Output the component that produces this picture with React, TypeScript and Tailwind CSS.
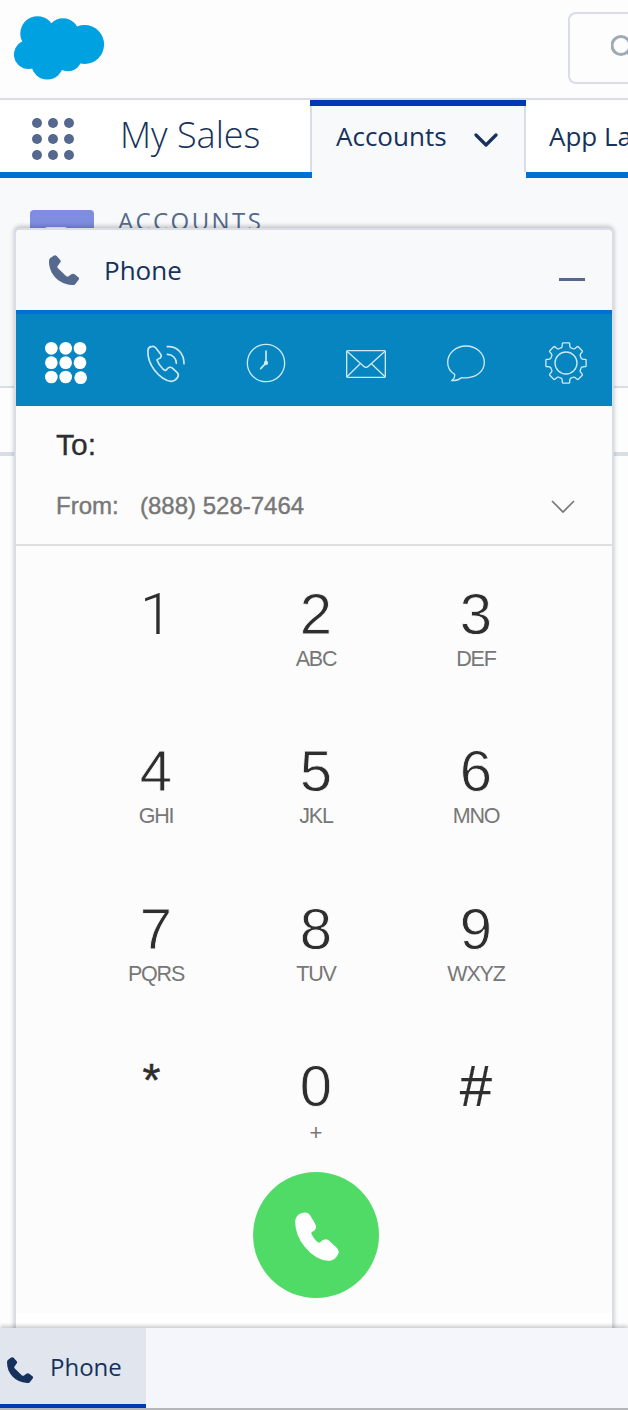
import React from 'react';

const keys = [
  ['1', ''], ['2', 'ABC'], ['3', 'DEF'],
  ['4', 'GHI'], ['5', 'JKL'], ['6', 'MNO'],
  ['7', 'PQRS'], ['8', 'TUV'], ['9', 'WXYZ'],
  ['*', ''], ['0', '+'], ['#', ''],
];

const digitStyles: Record<string, string> = {
  '1': "font-['Roboto',sans-serif] font-light",
  '*': '-ml-[9px] mb-3 text-[46px] leading-[49px] [-webkit-text-stroke:0.5px_#2e2e2e]',
  '#': '[-webkit-text-stroke:0.2px_#2e2e2e]',
};

function gearPath(cx: number, cy: number) {
  const pts: string[] = [];
  for (let i = 0; i < 8; i++) {
    const profile: [number, number][] = [[48, -16], [52, -12.5], [60, -10.5], [61, -8], [61, 8], [60, 10.5], [52, 12.5], [48, 16]];
    for (const [r, d] of profile) {
      const a = ((i * 45 + d - 90) * Math.PI) / 180;
      pts.push(`${(cx + r * Math.cos(a)).toFixed(1)} ${(cy + r * Math.sin(a)).toFixed(1)}`);
    }
  }
  return `M${pts.join('L')}Z`;
}

function Handset({ className }: { className: string }) {
  return (
    <svg viewBox="147 195 90 90" className={className} fill="currentColor">
      <path d="M160 198q5-4 10 0l10 11q4 4 1 8l-8 11q-2 4 1 7l24 23q4 3 8 1l8-6q5-4 10 0l11 9q4 3 1 7l-10 13q-3 4-10 3C175 282 147 252 147 213q0-5 3-8z" />
    </svg>
  );
}

function Toolbar() {
  const cell = 'h-[92px] w-[100px] shrink-0';
  const line = { fill: 'none', stroke: '#cfe8f4', strokeWidth: 4, strokeLinejoin: 'round' as const, strokeLinecap: 'round' as const };
  return (
    <div className="flex h-[92px] overflow-hidden bg-[#0785c0]">
      <svg viewBox="0 12 300 276" className={cell} fill="#fff">
        {[115, 158, 201].map((y) => [106, 149, 192].map((x) => (
          <circle key={`${x}-${y}`} cx={x === 192 && y === 201 ? 194 : x} cy={x === 192 && y === 201 ? 203 : y} r="19" />
        )))}
      </svg>
      <svg viewBox="300 12 300 276" className={cell} {...line}>
        <path strokeWidth="5" d="M396 120Q397 112 405 110Q414 107 419 113L434 133Q438 139 433 144Q425 147 423 150Q428 165 441 177Q447 182 450 181Q455 174 460 172Q466 171 470 175L483 187Q490 193 485 202Q477 214 466 214Q440 212 415 180Q393 150 396 120Z" />
        <path strokeWidth="5" d="M454 133C470 133 481 145 481 160M454 110C485 108 504 132 504 161" />
      </svg>
      <svg viewBox="600 12 300 276" className={cell} {...line}>
        <circle cx="750" cy="159" r="56" />
        <path strokeWidth="5" d="M750 123V159L734 176" />
        <circle cx="750" cy="159" r="4.5" fill="#cfe8f4" />
      </svg>
      <svg viewBox="0 12 300 276" className={cell} {...line}>
        <rect x="92" y="122" width="116" height="80" rx="3" />
        <path d="M93 124L142 168Q150 176 158 168L207 124M93 200L131 163M207 200L168 163" />
      </svg>
      <svg viewBox="300 12 300 276" className={cell} {...line}>
        <path d="M436 203Q424 213 407 212Q417 205 416 193C402 185 395 172 395 157C395 129 420 108 450 108C480 108 505 129 505 157C505 187 476 207 436 203Z" />
      </svg>
      <svg viewBox="600 12 300 276" className={cell} {...line}>
        <path d={gearPath(750, 159)} />
        <circle cx="750" cy="159" r="33" />
      </svg>
    </div>
  );
}

export default function App() {
  return (
    <div className="relative flex h-[1410px] w-[628px] flex-col overflow-hidden bg-[#fdfdfd] font-['Open_Sans','Noto_Sans',sans-serif] text-[#16325c]">
      <header className="flex h-[100px] shrink-0 justify-between border-b-2 border-[#d8dde6] pt-3 pl-[14px]">
        <svg viewBox="14 16 91 64" className="mt-1 h-16 w-[91px]" fill="#00a1e0">
          <circle cx="37.5" cy="33.5" r="17.2" />
          <circle cx="63" cy="34.5" r="16.2" />
          <circle cx="84.6" cy="44.5" r="19.5" />
          <circle cx="28.5" cy="54.5" r="14.6" />
          <circle cx="47.3" cy="63.8" r="15.8" />
          <circle cx="68" cy="57.5" r="13.7" />
          <path d="M30 35H80V60H30Z" />
        </svg>
        <div className="h-[72px] w-[60px] shrink-0 rounded-l-lg border-2 border-r-0 border-[#d8dde6] pt-[21px] pl-[41px]">
          <svg viewBox="0 0 22 28" className="h-7 w-[22px]" fill="none" stroke="#9faab5" strokeWidth="3">
            <circle cx="10" cy="10.5" r="9" />
            <path d="M16 17L22 23" />
          </svg>
        </div>
      </header>

      <nav className="flex h-[78px] shrink-0 bg-[#f7f9fb]">
        <div className="flex w-[312px] shrink-0 border-b-[6px] border-[#0070d2] bg-white">
          <svg viewBox="0 0 42 42" className="mt-[18px] ml-8 size-[42px]" fill="#54698d">
            {[5, 21, 37].map((y) => [5, 21, 37].map((x) => <circle key={`${x}-${y}`} cx={x} cy={y} r="5" />))}
          </svg>
          <span className="mt-[13px] ml-[46px] text-[36px] leading-[44px] font-light whitespace-nowrap">My Sales</span>
        </div>
        <div className="-ml-[2px] h-[72px] w-[216px] shrink-0 border-t-[6px] border-[#0039b3] bg-[#f7f9fb]">
          <div className="flex h-[66px] w-full border-x-2 border-[#d8dde6] pl-6">
            <span className="w-[138px] pt-[14px] text-[26px] leading-8">Accounts</span>
            <svg viewBox="0 0 24 14" className="mt-[27px] h-[14px] w-6" fill="none" stroke="#16325c" strokeWidth="3.2" strokeLinecap="round" strokeLinejoin="round">
              <path d="M2 2L12 12L22 2" />
            </svg>
          </div>
        </div>
        <div className="w-[102px] shrink-0 overflow-hidden border-b-[6px] border-[#0070d2] bg-white pt-5 pl-[23px] text-[26px] leading-8 whitespace-nowrap">App La</div>
      </nav>

      <div className="flex h-[210px] shrink-0 border-b-2 border-[#d8dde6] bg-[#f7f9fb] pt-8 pl-[30px]">
        <div className="h-16 w-16 rounded-[4px] bg-[#7f8de1] pt-[17px] pl-[14px]">
          <div className="h-6 w-6 rounded-sm bg-white" />
        </div>
        <span className="-mt-[5px] ml-6 text-[24px] leading-8 tracking-[2.4px] text-[#54698d]">ACCOUNTS</span>
      </div>
      <div className="h-[68px] shrink-0 border-b-4 border-[#d8dde6] bg-[#fdfdfd]" />

      <section className="absolute top-[228px] left-[14px] flex h-[1110px] w-[600px] flex-col overflow-hidden rounded-t-[6px] border-2 border-[#d8dde6] bg-white shadow-[0_-2px_4px_0_rgba(0,0,0,0.22)]">
        <div className="flex h-[84px] shrink-0 border-b-4 border-[#0070d2] bg-[#f7f9fb]">
          <Handset className="mt-[25px] ml-[33px] size-[30px] text-[#54698d]" />
          <span className="mt-[24px] ml-[25px] grow text-[26px] leading-8">Phone</span>
          <div className="mt-[48px] mr-[27px] h-[3px] w-[26px] bg-[#54698d]" />
        </div>
        <Toolbar />
        <div className="flex h-[140px] shrink-0 flex-col border-b-2 border-[#dedfe0] bg-[#fcfcfc] pl-10 font-['Liberation_Sans',Arial,sans-serif]">
          <span className="mt-[19px] text-[30px] leading-10 text-[#2e2e2e] [-webkit-text-stroke:0.3px_#2e2e2e]">To:</span>
          <div className="mt-[27px] flex text-[24px] leading-7 text-[#777] [-webkit-text-stroke:0.4px_#777]">
            <span className="w-[84px]">From:</span>
            <span className="w-[411px]">(888) 528-7464</span>
            <svg viewBox="0 0 24 14" className="mt-[8px] h-[14px] w-6" fill="none" stroke="#777" strokeWidth="1.7">
              <path d="M1 1L12 12L23 1" />
            </svg>
          </div>
        </div>
        <div className="flex h-[767px] shrink-0 flex-col items-center bg-[#fcfcfc] pt-[38px] pl-1 font-['Liberation_Sans',Arial,sans-serif]">
          <div className="grid h-[588px] w-[480px] shrink-0 auto-rows-[157.3px] grid-cols-3 text-center text-[58px] leading-[60px] text-[#2e2e2e]">
            {keys.map(([digit, letters]) => (
              <div key={digit}>
                <div className={digitStyles[digit] ?? '[-webkit-text-stroke:0.8px_#fcfcfc]'}>{digit}</div>
                <div className={letters === '+' ? 'mt-[5px] text-[22px] leading-6 text-[#777]' : 'mt-[3px] text-[21.5px] leading-6 tracking-[-1.2px] text-[#777]'}>{letters}</div>
              </div>
            ))}
          </div>
          <button className="flex size-[126px] shrink-0 items-center justify-center rounded-full bg-[#4fdb66]">
            <svg viewBox="195 156 133 149" className="mt-[3px] ml-[2px] h-[49px] w-[44px]" fill="#fff">
              <path d="M213 160Q232 153 240 165L256 192Q262 204 254 212L246 217Q243 219 245 223Q254 242 266 249Q269 250 272 247Q284 234 297 242L320 263Q331 272 326 284Q316 303 302 304Q262 308 224 262Q195 226 195 185Q197 166 213 160Z" />
            </svg>
          </button>
        </div>
      </section>

      <footer className="absolute bottom-0 left-0 flex h-[82px] w-[628px] border-b-2 border-[#b5b6b9] bg-[#f4f6fb] shadow-[0_-2px_4px_0_rgba(0,0,0,0.22)]">
        <div className="flex h-20 w-[146px] border-b-4 border-[#0039b3] bg-[#e0e5ee]">
          <Handset className="mt-[29px] ml-[7px] size-[26px]" />
          <span className="mt-[23px] ml-[17px] text-[24px] leading-8">Phone</span>
        </div>
      </footer>
    </div>
  );
}
